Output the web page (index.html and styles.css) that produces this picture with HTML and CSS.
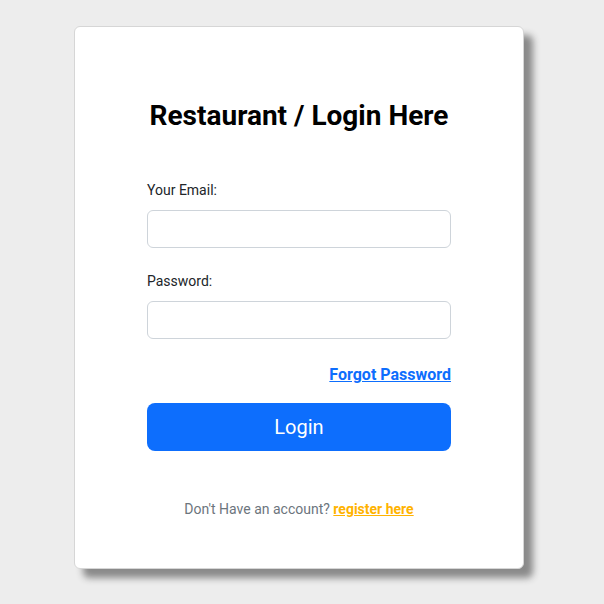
FILE: index.html
```html
<!DOCTYPE html>
<html lang="en">
<head>
<meta charset="utf-8">
<title>Restaurant Login</title>
<link rel="stylesheet" href="styles.css">
</head>
<body>
<main class="page">
  <section class="card">
    <h1 class="title">Restaurant / Login Here</h1>
    <form class="form">
      <div class="field">
        <label class="label" for="email">Your Email:</label>
        <input class="input" id="email" type="email">
      </div>
      <div class="field">
        <label class="label" for="pw">Password:</label>
        <input class="input" id="pw" type="password">
      </div>
      <div class="forgot-row"><a class="forgot" href="#">Forgot Password</a></div>
      <button class="btn" type="button">Login</button>
    </form>
    <p class="register">Don't Have an account? <a class="register-link" href="#">register here</a></p>
  </section>
</main>
</body>
</html>
```
FILE: styles.css
```css
html, body {
  margin: 0;
  padding: 0;
}
body {
  background: #ededed;
  font-family: Roboto, "Liberation Sans", sans-serif;
  color: #212529;
}
.page {
  box-sizing: border-box;
  min-height: 604px;
  display: flex;
  justify-content: center;
  align-items: flex-start;
  padding: 26px 6px 20px 0;
}
.card {
  box-sizing: border-box;
  width: 450px;
  height: 543px;
  background: #fff;
  border: 1px solid #d6d6d6;
  border-radius: 6px;
  box-shadow: 9px 9px 7px #8a8a8a;
  padding: 0 72px;
  display: flex;
  flex-direction: column;
}
.title {
  margin: 72px 0 0;
  font-size: 28px;
  font-weight: 700;
  line-height: 33px;
  text-align: center;
  color: #000;
}
.form {
  margin-top: 48px;
  display: flex;
  flex-direction: column;
}
.field {
  display: flex;
  flex-direction: column;
  margin-bottom: 23px;
}
.label {
  font-size: 14px;
  line-height: 20px;
  margin-bottom: 10px;
  color: #212529;
}
.input {
  box-sizing: border-box;
  height: 38px;
  border: 1px solid #ced4da;
  border-radius: 6px;
  padding: 6px 12px;
  font-size: 16px;
  background: #fff;
}
.forgot-row {
  display: flex;
  justify-content: flex-end;
  margin-top: 1px;
}
.forgot {
  color: #0d6efd;
  font-weight: 700;
  font-size: 16px;
  line-height: 24px;
  text-decoration: underline;
}
.btn {
  margin-top: 16px;
  height: 48px;
  border: none;
  border-radius: 8px;
  background: #0d6efd;
  color: #fff;
  font-family: Roboto, "Liberation Sans", sans-serif;
  font-size: 20px;
}
.register {
  margin: 48px 0 0;
  text-align: center;
  font-size: 14px;
  line-height: 20px;
  color: #6c757d;
}
.register-link {
  color: #ffb300;
  font-weight: 700;
  text-decoration: underline;
}
```
